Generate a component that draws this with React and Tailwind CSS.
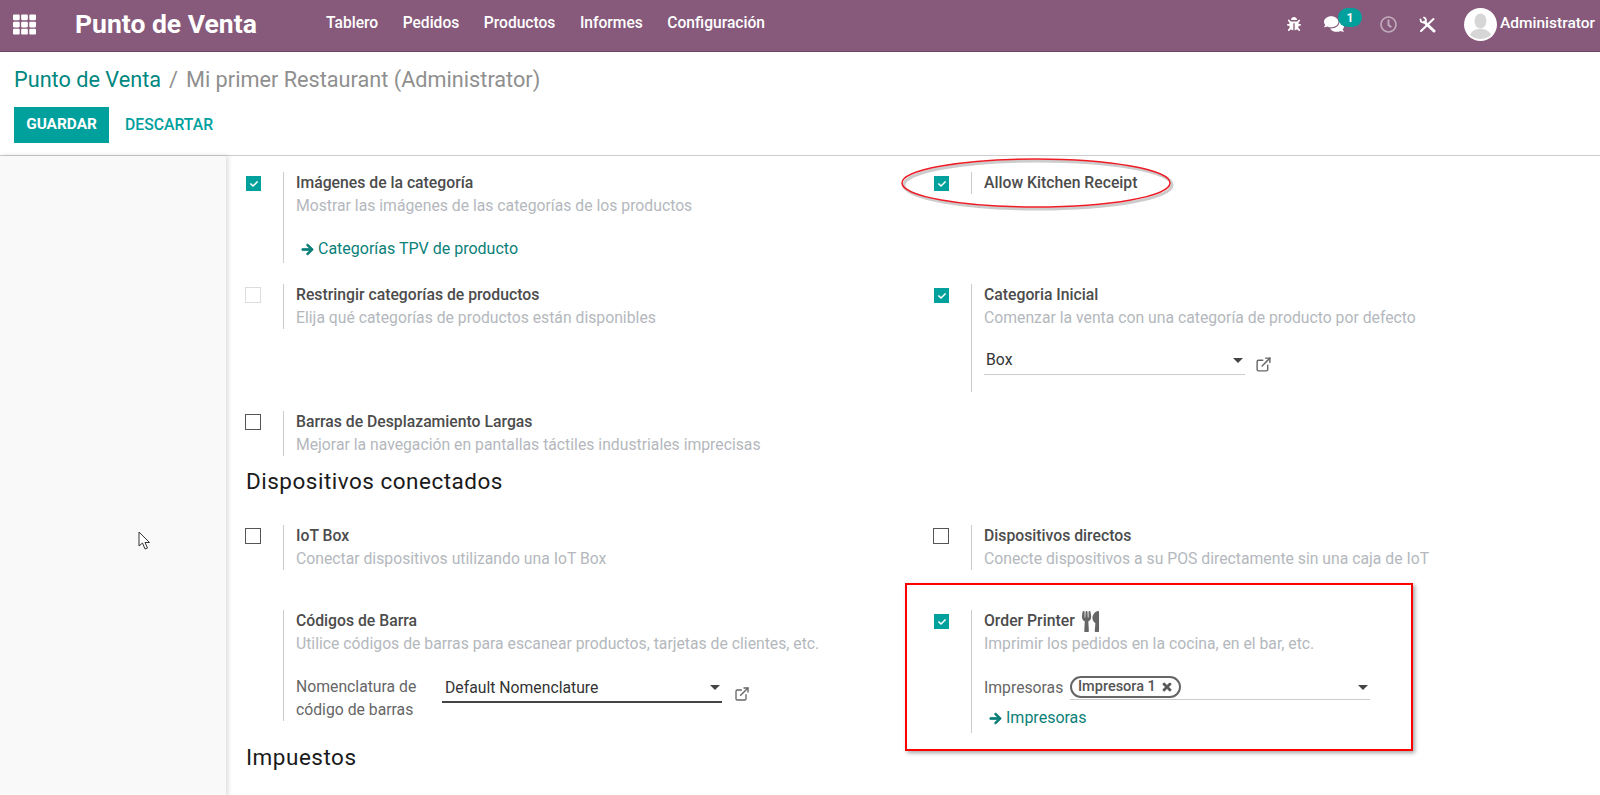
import { FaBug, FaComments, FaRegClock, FaTh, FaUtensils, FaArrowRight, FaTimes, FaCheck } from 'react-icons/fa';

const navItems = ['Tablero', 'Pedidos', 'Productos', 'Informes', 'Configuración'];

function Checkbox({ state }) {
  if (state === 'checked') {
    return (
      <span className="mt-1 flex h-[15px] w-[15px] items-center justify-center bg-[#00A09D] text-white">
        <FaCheck className="text-[8px]" />
      </span>
    );
  }
  if (state === 'disabled') {
    return <span className="mt-[3px] -ml-px block h-4 w-4 border border-[#dddddd] bg-white" />;
  }
  if (state === 'empty') {
    return <span className="mt-[3px] -ml-px block h-4 w-4 border border-[#555555] bg-white" />;
  }
  return null;
}

function Setting({ state, title, desc, icon, children }) {
  return (
    <div className="flex items-start">
      <div className="w-[37px] shrink-0">
        <Checkbox state={state} />
      </div>
      <div className="border-l border-[#cccccc] pl-3">
        <div className="flex items-center text-[15.75px] leading-[22px] font-medium text-[#4c4c4c]">
          {title}
          {icon}
        </div>
        {desc && <div className="text-[15.75px] leading-[23px] text-[#b4b8bd]">{desc}</div>}
        {children}
      </div>
    </div>
  );
}

function ArrowLink({ children, className }) {
  return (
    <div className={'flex items-center pl-[5px] text-[16px] leading-[22px] text-[#0b7f79] ' + className}>
      <FaArrowRight className="mr-[4px] stroke-current stroke-[30px] text-[13px]" />
      {children}
    </div>
  );
}

function Caret() {
  return <span className="block h-0 w-0 border-x-[5px] border-t-[5px] border-x-transparent border-t-[#444444]" />;
}

function ExternalIcon({ className }) {
  return (
    <svg className={className} viewBox="0 0 24 24" fill="none" stroke="#666666" strokeWidth="2" strokeLinecap="round" strokeLinejoin="round">
      <path d="M18 13v6a2 2 0 0 1-2 2H5a2 2 0 0 1-2-2V8a2 2 0 0 1 2-2h6" />
      <path d="M15 3h6v6" />
      <path d="M10 14 21 3" />
    </svg>
  );
}

export default function App() {
  return (
    <div className="relative h-[795px] w-[1600px] overflow-hidden bg-white font-['Roboto',sans-serif]">
      {/* Top bar */}
      <nav className="flex h-[52px] items-center border-b border-[#6d4463] bg-[#875A7B] pb-[3px] text-white">
        <FaTh className="ml-[13px] text-[23px]" />
        <div className="ml-[39px] w-[251px] text-[26.5px] font-bold">Punto de Venta</div>
        <div className="flex gap-[24.5px] text-[15.6px] font-medium">
          {navItems.map((item) => (
            <span key={item}>{item}</span>
          ))}
        </div>
        <div className="ml-auto flex items-center">
          <FaBug className="text-[14px]" />
          <div className="relative ml-[23px] w-[46px]">
            <FaComments className="text-[20px]" />
            <span className="absolute -top-[6px] left-[14px] flex h-[19px] w-6 items-center justify-center rounded-full bg-[#00A09D] text-[12px] font-bold">
              1
            </span>
          </div>
          <FaRegClock className="ml-[10px] text-[17px] text-white/50" />
          <svg className="ml-[22px] h-[17px] w-[17px]" viewBox="0 0 17 17" fill="none" stroke="#ffffff" strokeLinecap="round">
            <path d="M2 15 14.500 3" strokeWidth="2" />
            <path d="M5.500 6 15 15" strokeWidth="3" />
            <path d="M1.500 3.500c0 2.500 2.500 4 5 2.500 1-1.500.5-3.500-1.500-4.500" strokeWidth="1.800" />
          </svg>
          <svg className="ml-[28px] h-[33px] w-[33px]" viewBox="0 0 33 33">
            <circle cx="16.5" cy="16.5" r="16.5" fill="#ffffff" />
            <ellipse cx="16.5" cy="13" rx="6" ry="7.5" fill="#d6d6d6" />
            <path d="M6 27c2-5 6-6 10.500-6s8.500 1 10.500 6a16 16 0 0 1-21 0z" fill="#d6d6d6" />
          </svg>
          <span className="mr-[5px] ml-[3px] text-[15.5px] font-medium">Administrator</span>
        </div>
      </nav>

      {/* Control panel */}
      <header className="h-[104px] border-b border-[#cccccc] px-[14px]">
        <div className="pt-[13px] text-[21.7px] leading-[30px] text-[#8f8f8f]">
          <span className="text-[#00877f]">Punto de Venta</span>
          <span className="mx-2">/</span>
          Mi primer Restaurant (Administrator)
        </div>
        <div className="mt-3 flex items-center">
          <button className="h-9 w-[95px] bg-[#00A09D] text-[15.4px] font-bold text-white">GUARDAR</button>
          <button className="ml-4 text-[15.75px] font-medium text-[#00A09D]">DESCARTAR</button>
        </div>
      </header>

      <div className="flex h-[640px]">
        <aside className="w-[226px] shrink-0 bg-[#f9f9f9] shadow-[2px_0_5px_rgba(0,0,0,0.15)]" />
        <main className="flex-1 pt-4 pl-5">
          <div className="grid grid-cols-[688px_1fr] items-start">
            <Setting state="checked" title="Imágenes de la categoría" desc="Mostrar las imágenes de las categorías de los productos">
              <ArrowLink className="mt-[21px] pb-[3px]">Categorías TPV de producto</ArrowLink>
            </Setting>
            <Setting state="checked" title="Allow Kitchen Receipt" />
          </div>
          <div className="mt-[21px] grid grid-cols-[688px_1fr] items-start">
            <Setting state="disabled" title="Restringir categorías de productos" desc="Elija qué categorías de productos están disponibles" />
            <Setting state="checked" title="Categoria Inicial" desc="Comenzar la venta con una categoría de producto por defecto">
              <div className="mt-[17px] flex items-start pb-[17px]">
                <div className="flex h-[29px] w-[261px] items-center justify-between border-b border-[#cccccc] pr-[2px] pl-[2px] text-[15.75px] text-[#333333]">
                  Box
                  <Caret />
                </div>
                <ExternalIcon className="mt-[10px] ml-[10px] h-[17px] w-[17px]" />
              </div>
            </Setting>
          </div>
          <div className="mt-[19px]">
            <Setting state="empty" title="Barras de Desplazamiento Largas" desc="Mejorar la navegación en pantallas táctiles industriales imprecisas" />
          </div>

          <h2 className="mt-[10px] text-[22.5px] leading-[30px] tracking-[0.5px] text-[#1a1a1a]">Dispositivos conectados</h2>

          <div className="mt-[29px] grid grid-cols-[688px_1fr] items-start">
            <Setting state="empty" title="IoT Box" desc="Conectar dispositivos utilizando una IoT Box" />
            <Setting state="empty" title="Dispositivos directos" desc="Conecte dispositivos a su POS directamente sin una caja de IoT" />
          </div>
          <div className="mt-10 grid grid-cols-[688px_1fr] items-start">
            <Setting title="Códigos de Barra" desc="Utilice códigos de barras para escanear productos, tarjetas de clientes, etc.">
              <div className="mt-[21px] flex items-start">
                <div className="-mt-px w-[146px] text-[15.75px] leading-[23px] text-[#666666]">
                  Nomenclatura de
                  <br />
                  código de barras
                </div>
                <div className="-mt-[2px] flex h-[29px] w-[280px] items-center justify-between border-b-2 border-[#444444] pr-[2px] pl-[3px] text-[15.75px] text-[#333333]">
                  Default Nomenclature
                  <Caret />
                </div>
                <ExternalIcon className="mt-[10px] ml-3 h-4 w-4" />
              </div>
            </Setting>
            <Setting
              state="checked"
              title="Order Printer"
              desc="Imprimir los pedidos en la cocina, en el bar, etc."
              icon={<FaUtensils className="ml-[5px] text-[21px] text-[#666666]" />}
            >
              <div className="mt-[21px] flex h-6 items-start">
                <div className="w-[86px] text-[15.75px] leading-[23px] text-[#666666]">Impresoras</div>
                <div className="flex h-6 w-[300px] items-start justify-between border-b border-[#cccccc] pr-[2px]">
                  <span className="flex h-[22px] items-center rounded-full border-2 border-[#666666] px-[6px] text-[14.5px] font-medium text-[#555555]">
                    Impresora 1
                    <FaTimes className="ml-[5px] stroke-current stroke-[30px] text-[12px]" />
                  </span>
                  <span className="mt-[9px]">
                    <Caret />
                  </span>
                </div>
              </div>
              <ArrowLink className="mt-[7px] pb-1">Impresoras</ArrowLink>
            </Setting>
          </div>

          <h2 className="mt-[9px] text-[22.5px] leading-[30px] tracking-[0.5px] text-[#1a1a1a]">Impuestos</h2>
        </main>
      </div>

      {/* Annotations drawn over the screenshot */}
      <svg className="absolute top-[157px] left-[899px] h-[56px] w-[276px]" viewBox="0 0 276 56" fill="none">
        <ellipse cx="139" cy="28" rx="134" ry="24" stroke="#000000" strokeOpacity="0.2" strokeWidth="3" />
        <ellipse cx="137" cy="26" rx="134" ry="24" stroke="#ee1c25" strokeWidth="1.5" />
      </svg>
      <div className="absolute top-[583px] left-[905px] h-[168px] w-[508px] border-2 border-[#ff0000] shadow-[2px_2px_4px_rgba(0,0,0,0.35)]" />
      <svg className="absolute top-[531px] left-[138px] h-[19px] w-[13px]" viewBox="0 0 13 19" fill="#ffffff" stroke="#333333" strokeWidth="1">
        <path d="M1 1v14l3.500-3 2.500 6 2.500-1-2.500-5.500h4.500z" />
      </svg>
    </div>
  );
}
